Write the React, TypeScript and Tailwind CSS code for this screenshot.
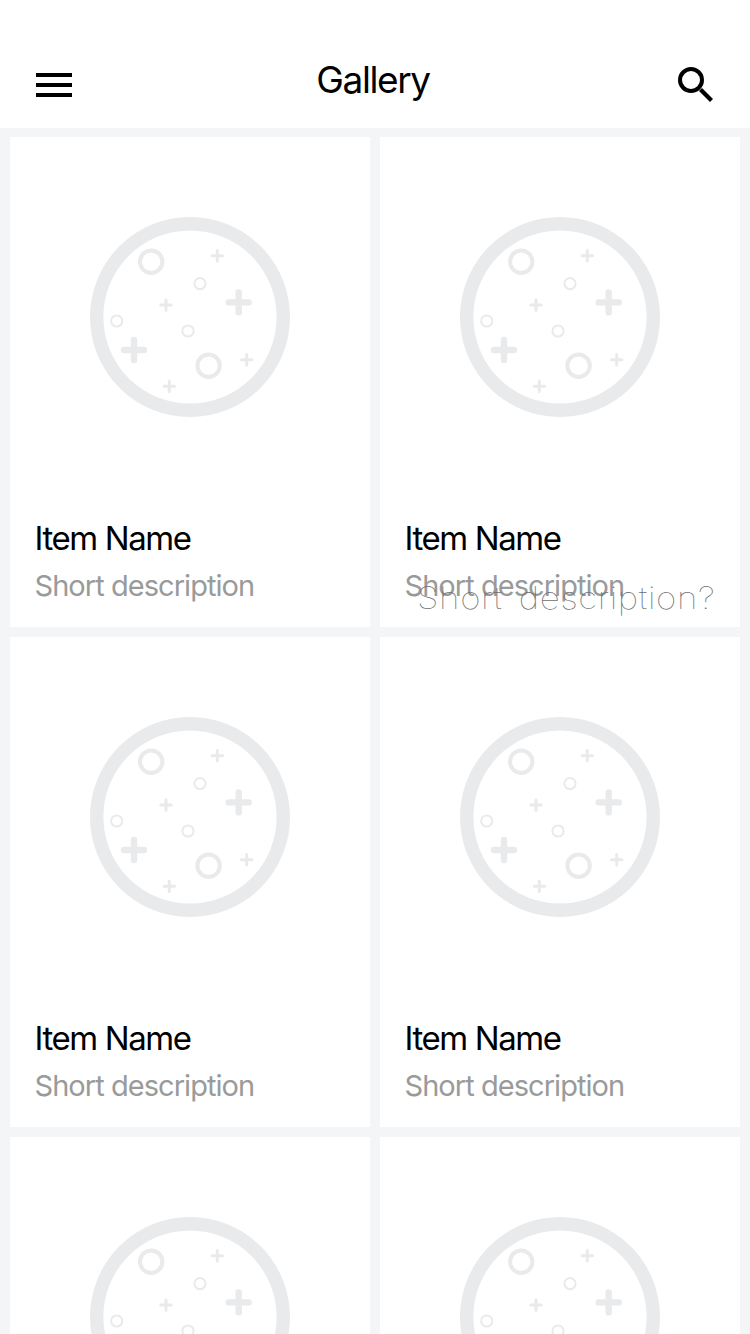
import React from "react";

const rings: [number, number, number, number][] = [
  [61.2, 44.7, 11.2, 4],
  [118.6, 148.7, 11.2, 4],
  [110, 66.6, 5.6, 2],
  [26.7, 104, 5.6, 2],
  [98, 114, 5.6, 2],
];

const pluses: [number, number, number, number][] = [
  [127.3, 38.7, 5.2, 3],
  [76, 88, 5.2, 3],
  [156.7, 142.7, 5.2, 3],
  [79.3, 169.3, 5.2, 3],
  [148.7, 85.4, 10, 6.4],
  [44, 133, 10, 6.4],
];

function Moon() {
  return (
    <svg viewBox="0 0 200 200" className="size-[200px]" fill="none" stroke="#e9eaec">
      <circle cx="100" cy="100" r="93.3" strokeWidth="13.4" />
      {rings.map(([x, y, r, w]) => (
        <circle key={`${x}-${y}`} cx={x} cy={y} r={r} strokeWidth={w} />
      ))}
      {pluses.map(([x, y, h, w]) => (
        <path
          key={`${x}-${y}`}
          d={`M${x - h} ${y}H${x + h}M${x} ${y - h}V${y + h}`}
          strokeWidth={w}
          strokeLinecap="round"
        />
      ))}
    </svg>
  );
}

function Card({ hint }: { hint?: string }) {
  return (
    <article className="relative flex h-[490px] flex-col bg-white">
      <div className="flex h-[360px] shrink-0 items-center justify-center">
        <Moon />
      </div>
      <div className="flex flex-col items-start pt-[21px] pl-[24.5px] whitespace-nowrap">
        <h2 className="text-[33px] leading-[40px] tracking-[-1.4px] text-black">Item Name</h2>
        <p className="mt-[10px] text-[29px] leading-[36px] tracking-[-0.95px] text-[#999b9b]">Short description</p>
      </div>
      {hint && (
        <span className="absolute top-[442px] left-[37px] origin-left scale-x-[1.13] text-[31px] leading-[38px] font-thin tracking-[0.55px] [word-spacing:5px] whitespace-nowrap text-[#6c6e73]">
          {hint}
        </span>
      )}
    </article>
  );
}

export default function App() {
  return (
    <div className="h-[1334px] w-[750px] overflow-hidden bg-[#f3f5f7] font-['Inter','Liberation_Sans',sans-serif]">
      <header className="flex h-32 items-start justify-between bg-white">
        <button aria-label="Menu" className="mt-[73px] ml-9 flex w-9 flex-col gap-1.5">
          <span className="h-1 bg-black" />
          <span className="h-1 bg-black" />
          <span className="h-1 bg-black" />
        </button>
        <h1 className="mt-[57px] text-[37px] leading-[46px] tracking-[-1.4px] text-black">Gallery</h1>
        <button aria-label="Search" className="mt-16 mr-9">
          <svg viewBox="0 0 40 40" className="size-10" fill="none" stroke="#000">
            <circle cx="17" cy="16" r="11" strokeWidth="4" />
            <path d="M26.5 25.5L37.5 36.5" strokeWidth="4.2" />
          </svg>
        </button>
      </header>
      <main className="grid grid-cols-2 gap-2.5 px-2.5 pt-[9px]">
        <Card />
        <Card hint="Short description?" />
        <Card />
        <Card />
        <Card />
        <Card />
      </main>
    </div>
  );
}
